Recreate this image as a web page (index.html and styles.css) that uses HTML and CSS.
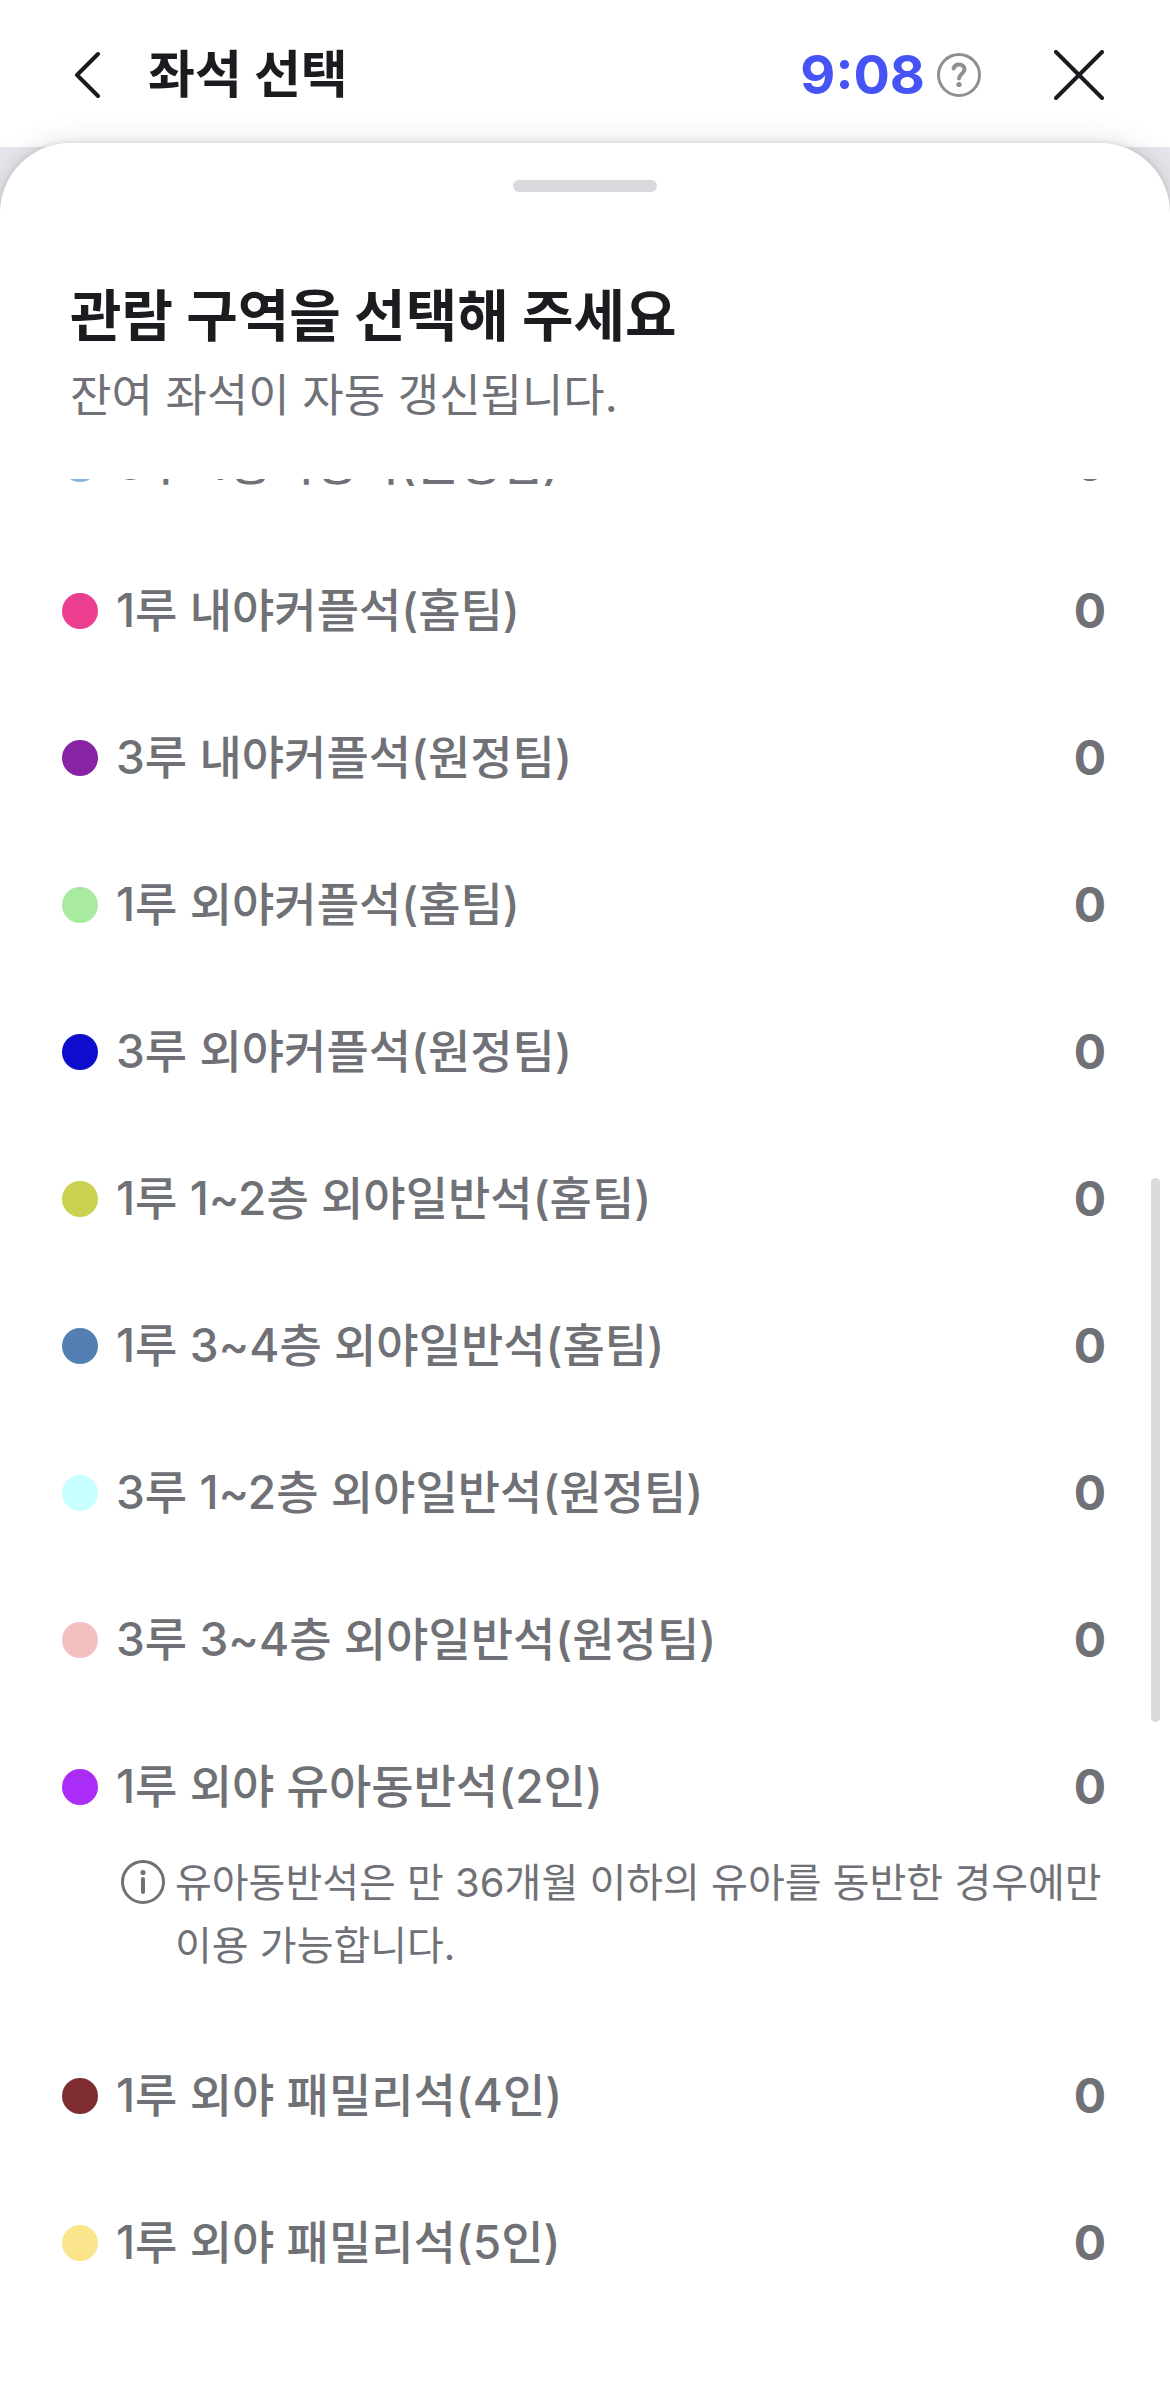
FILE: index.html
```html
<!DOCTYPE html>
<html lang="ko">
<head>
    <meta charset="UTF-8">
    <meta name="viewport" content="width=device-width, initial-scale=1.0">
    <title>좌석 선택</title>
    <link rel="stylesheet" href="styles.css">
</head>
<body>
    <header class="header">
        <button type="button" class="back" aria-label="뒤로">
            <svg width="28" height="50" viewBox="0 0 28 50"><path d="M26 4 L5 25 L26 46"/></svg>
        </button>
        <h1 class="header-title">좌석 선택</h1>
        <span class="timer">9:08</span>
        <button type="button" class="help" aria-label="도움말">
            <svg width="44" height="44" viewBox="0 0 44 44">
                <circle cx="22" cy="22" r="20.5"/>
                <path d="M16.5 15.5C17.5 12.5 19.5 11.5 22 11.5C25.5 11.5 27.5 13.5 27.5 16.5C27.5 20.5 22 21 22 25.5" stroke-width="4"/>
                <circle class="dot" cx="22" cy="31.5" r="2.6"/>
            </svg>
        </button>
        <button type="button" class="close" aria-label="닫기">
            <svg width="50" height="50" viewBox="0 0 50 50"><path d="M2 2 L48 48 M48 2 L2 48"/></svg>
        </button>
    </header>

    <main class="sheet">
        <div class="handle"></div>
        <h2 class="sheet-title">관람 구역을 선택해 주세요</h2>
        <p class="sheet-desc">잔여 좌석이 자동 갱신됩니다.</p>

        <div class="list-area">
            <ul class="zone-list">
                <li class="zone"><button type="button" class="row"><span class="color c1"></span><span class="name">3루 4층지정석(원정팀)</span><span class="count">0</span></button></li>
                <li class="zone"><button type="button" class="row"><span class="color c2"></span><span class="name">1루 내야커플석(홈팀)</span><span class="count">0</span></button></li>
                <li class="zone"><button type="button" class="row"><span class="color c3"></span><span class="name">3루 내야커플석(원정팀)</span><span class="count">0</span></button></li>
                <li class="zone"><button type="button" class="row"><span class="color c4"></span><span class="name">1루 외야커플석(홈팀)</span><span class="count">0</span></button></li>
                <li class="zone"><button type="button" class="row"><span class="color c5"></span><span class="name">3루 외야커플석(원정팀)</span><span class="count">0</span></button></li>
                <li class="zone"><button type="button" class="row"><span class="color c6"></span><span class="name">1루 1~2층 외야일반석(홈팀)</span><span class="count">0</span></button></li>
                <li class="zone"><button type="button" class="row"><span class="color c7"></span><span class="name">1루 3~4층 외야일반석(홈팀)</span><span class="count">0</span></button></li>
                <li class="zone"><button type="button" class="row"><span class="color c8"></span><span class="name">3루 1~2층 외야일반석(원정팀)</span><span class="count">0</span></button></li>
                <li class="zone"><button type="button" class="row"><span class="color c9"></span><span class="name">3루 3~4층 외야일반석(원정팀)</span><span class="count">0</span></button></li>
                <li class="zone">
                    <button type="button" class="row"><span class="color c10"></span><span class="name">1루 외야 유아동반석(2인)</span><span class="count">0</span></button>
                    <div class="note">
                        <svg width="44" height="44" viewBox="0 0 44 44">
                            <circle cx="22" cy="22" r="20.5"/>
                            <path d="M22 19 V32" stroke-width="4"/>
                            <circle class="dot" cx="22" cy="12.5" r="2.6"/>
                        </svg>
                        <p>유아동반석은 만 36개월 이하의 유아를 동반한 경우에만 이용 가능합니다.</p>
                    </div>
                </li>
                <li class="zone"><button type="button" class="row"><span class="color c11"></span><span class="name">1루 외야 패밀리석(4인)</span><span class="count">0</span></button></li>
                <li class="zone"><button type="button" class="row"><span class="color c12"></span><span class="name">1루 외야 패밀리석(5인)</span><span class="count">0</span></button></li>
            </ul>
            <div class="scroll-thumb"></div>
        </div>
    </main>
</body>
</html>
```
FILE: styles.css
```css
* {
    box-sizing: border-box;
}
body {
    margin: 0;
    height: 100vh;
    display: flex;
    flex-direction: column;
    overflow: hidden;
    background-color: #e6e7ec;
    color: #1b1c20;
    font-family: Inter, "Noto Sans CJK KR", sans-serif;
}
h1, h2, p, ul {
    margin: 0;
    padding: 0;
}
ul {
    list-style: none;
}
button {
    margin: 0;
    padding: 0;
    border: none;
    background: none;
    color: inherit;
    font: inherit;
    text-align: left;
    cursor: pointer;
}
svg {
    display: block;
    flex: none;
    fill: none;
    stroke: currentColor;
    stroke-width: 3;
    stroke-linecap: round;
    stroke-linejoin: round;
}
svg .dot {
    fill: currentColor;
    stroke: none;
}

/* header */
.header {
    display: flex;
    align-items: center;
    height: 147px;
    padding: 3px 66px 0 72px;
    background-color: #fff;
}
.back svg, .close svg {
    stroke-width: 4;
}
.header-title {
    flex: 1;
    margin-left: 48px;
    font-size: 51px;
    line-height: 72px;
    font-weight: 700;
}
.timer {
    color: #4654f5;
    font-size: 54px;
    line-height: 72px;
    font-weight: 700;
}
.help {
    margin-left: 12px;
    color: #8e8f95;
}
.close {
    margin-left: 73px;
}

/* bottom sheet */
.sheet {
    position: relative;
    flex: 1;
    min-height: 0;
    display: flex;
    flex-direction: column;
    margin-top: -4px;
    padding-top: 37px;
    background-color: #fff;
    border-radius: 70px 70px 0 0;
    box-shadow: 0 0 30px rgba(0, 0, 0, 0.12), 0 0 6px rgba(0, 0, 0, 0.14);
}
.handle {
    width: 144px;
    height: 12px;
    margin: 0 auto;
    border-radius: 6px;
    background-color: #d9dadd;
}
.sheet-title {
    margin-top: 84px;
    padding: 0 70px;
    font-size: 56px;
    line-height: 80px;
    font-weight: 700;
}
.sheet-desc {
    margin-top: 8px;
    padding: 0 70px;
    color: #707176;
    font-size: 45px;
    line-height: 63px;
}

/* zone list */
.list-area {
    position: relative;
    flex: 1;
    min-height: 0;
    margin-top: 52px;
    overflow: hidden;
}
.zone-list {
    margin-top: -89px;
    padding: 0 64px 0 62px;
    color: #707176;
}
.zone {
    padding: 40px 0;
}
.row {
    display: flex;
    align-items: center;
    width: 100%;
    font-size: 46px;
    line-height: 67px;
    font-weight: 500;
}
.color {
    flex: none;
    width: 36px;
    height: 36px;
    margin-right: 18px;
    border-radius: 50%;
}
.name {
    flex: 1;
}
.count {
    font-size: 48px;
    font-weight: 700;
}
.note {
    display: flex;
    gap: 10px;
    margin: 31px 0 5px;
    padding-left: 59px;
    font-size: 40px;
    line-height: 63px;
}
.note svg {
    margin-top: 9px;
}
.c1 { background-color: #8db4df; }
.c2 { background-color: #ec3e8e; }
.c3 { background-color: #8823a6; }
.c4 { background-color: #a8eaa0; }
.c5 { background-color: #0f0bcf; }
.c6 { background-color: #cad24f; }
.c7 { background-color: #537fb3; }
.c8 { background-color: #c8ffff; }
.c9 { background-color: #f5bebe; }
.c10 { background-color: #ab2bf7; }
.c11 { background-color: #7d2d30; }
.c12 { background-color: #fbe58c; }

.scroll-thumb {
    position: absolute;
    top: 699px;
    right: 10px;
    width: 9px;
    height: 544px;
    border-radius: 5px;
    background-color: #dadada;
}
```
